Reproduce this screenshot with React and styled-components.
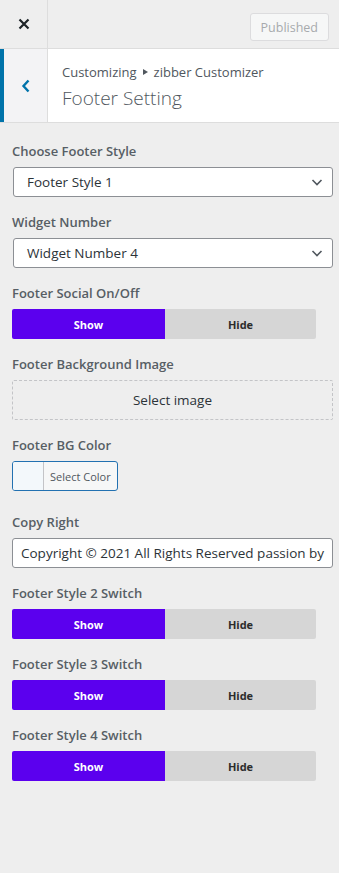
import React from "react";
import styled, { createGlobalStyle } from "styled-components";

const GlobalStyle = createGlobalStyle`
  html, body {
    margin: 0;
    padding: 0;
    background: #eeeeee;
  }
  body {
    font-family: "Open Sans", "Noto Sans", sans-serif;
    color: #50575e;
  }
  * {
    box-sizing: border-box;
  }
`;

const Sidebar = styled.div`
  width: 339px;
  min-height: 873px;
  background: #eeeeee;
`;

const Header = styled.div`
  display: flex;
  height: 49px;
  border-bottom: 1px solid #dddddd;
  background: #eeeeee;
`;

const CloseBox = styled.div`
  width: 48px;
  border-right: 1px solid #dddddd;
  display: flex;
  align-items: center;
  justify-content: center;
`;

const HeaderRight = styled.div`
  flex: 1;
  display: flex;
  align-items: flex-start;
  justify-content: flex-end;
  padding: 13px 10px 0 0;
`;

const PublishedBtn = styled.div`
  height: 28px;
  padding: 0 10px;
  border: 1px solid #dcdcde;
  border-radius: 3px;
  background: #f6f7f7;
  color: #a7aaad;
  font-size: 12.5px;
  display: flex;
  align-items: center;
`;

const SectionHead = styled.div`
  display: flex;
  height: 74px;
  background: #ffffff;
  border-bottom: 1px solid #dddddd;
`;

const BackBtn = styled.div`
  width: 48px;
  background: #f3f3f5;
  border-left: 4px solid #0073aa;
  border-right: 1px solid #dddddd;
  display: flex;
  align-items: center;
  justify-content: center;
`;

const TitleWrap = styled.div`
  padding: 15px 0 0 14px;
`;

const Crumb = styled.div`
  font-size: 13px;
  line-height: 16px;
  color: #50575e;
  display: flex;
  align-items: center;
  gap: 6px;
`;

const Arrow = styled.span`
  width: 0;
  height: 0;
  border-top: 3px solid transparent;
  border-bottom: 3px solid transparent;
  border-left: 5px solid #50575e;
`;

const Title = styled.div`
  font-size: 19px;
  font-weight: 300;
  line-height: 26px;
  margin-top: 5px;
  color: #50575e;
`;

const Body = styled.div`
  padding: 18px 6px 0 12px;
  display: flex;
  flex-direction: column;
`;

const Control = styled.div`
  margin-bottom: ${(p) => (p.extra ? "21px" : "15px")};
`;

const Label = styled.div`
  font-size: 13px;
  font-weight: 600;
  line-height: 20px;
  color: #575e65;
  margin-bottom: 6px;
`;

const SelectBox = styled.div`
  height: 30px;
  margin-left: 1px;
  border: 1px solid #8c8f94;
  border-radius: 3px;
  background: #ffffff;
  display: flex;
  align-items: center;
  justify-content: space-between;
  padding: 0 8px 0 13px;
  font-size: 13.5px;
  color: #2c3338;
`;

const Toggle = styled.div`
  display: flex;
  width: 304px;
  height: 30px;
  border-radius: 2px;
  overflow: hidden;
`;

const ToggleHalf = styled.div`
  flex: ${(p) => (p.active ? "0 0 153px" : "1")};
  display: flex;
  align-items: center;
  justify-content: center;
  font-size: 11px;
  font-weight: 700;
  background: ${(p) => (p.active ? "#5b00ee" : "#d6d6d6")};
  color: ${(p) => (p.active ? "#ffffff" : "#2c2c2c")};
`;

const ImageDrop = styled.div`
  height: 40px;
  border: 1px dashed #c3c4c7;
  border-radius: 2px;
  background: #eeeeee;
  display: flex;
  align-items: center;
  justify-content: center;
  font-size: 13.5px;
  color: #2c3338;
`;

const ColorBtn = styled.div`
  display: flex;
  width: 106px;
  height: 30px;
  border: 1px solid #2271b1;
  border-radius: 3px;
  overflow: hidden;
  background: #f6f7f7;
`;

const Swatch = styled.div`
  width: 31px;
  background: #f3f8fb;
  border-right: 1px solid #c3c4c7;
`;

const ColorText = styled.div`
  padding: 0 6px;
  display: flex;
  align-items: center;
  font-size: 11px;
  color: #50575e;
`;

const TextInput = styled.div`
  height: 30px;
  border: 1px solid #8c8f94;
  border-radius: 3px;
  background: #ffffff;
  display: flex;
  align-items: center;
  padding: 0 8px;
  font-size: 13.5px;
  color: #2c3338;
  white-space: nowrap;
  overflow: hidden;
`;

const Chevron = () => (
  <svg width="14" height="14" viewBox="0 0 14 14">
    <path d="M2.5 5 L7 9.5 L11.5 5" fill="none" stroke="#50575e" strokeWidth="1.6" />
  </svg>
);

const ShowHide = () => (
  <Toggle>
    <ToggleHalf active>Show</ToggleHalf>
    <ToggleHalf>Hide</ToggleHalf>
  </Toggle>
);

export default function App() {
  return (
    <Sidebar>
      <GlobalStyle />
      <Header>
        <CloseBox>
          <svg width="12" height="12" viewBox="0 0 12 12">
            <path d="M1.5 1.5 L10.5 10.5 M10.5 1.5 L1.5 10.5" stroke="#1d2327" strokeWidth="2.2" />
          </svg>
        </CloseBox>
        <HeaderRight>
          <PublishedBtn>Published</PublishedBtn>
        </HeaderRight>
      </Header>
      <SectionHead>
        <BackBtn>
          <svg width="10" height="16" viewBox="0 0 10 16">
            <path d="M7.5 2.5 L2.5 8 L7.5 13.5" fill="none" stroke="#0073aa" strokeWidth="2.4" />
          </svg>
        </BackBtn>
        <TitleWrap>
          <Crumb>
            Customizing <Arrow /> zibber Customizer
          </Crumb>
          <Title>Footer Setting</Title>
        </TitleWrap>
      </SectionHead>
      <Body>
        <Control>
          <Label>Choose Footer Style</Label>
          <SelectBox>
            Footer Style 1 <Chevron />
          </SelectBox>
        </Control>
        <Control>
          <Label>Widget Number</Label>
          <SelectBox>
            Widget Number 4 <Chevron />
          </SelectBox>
        </Control>
        <Control>
          <Label>Footer Social On/Off</Label>
          <ShowHide />
        </Control>
        <Control>
          <Label>Footer Background Image</Label>
          <ImageDrop>Select image</ImageDrop>
        </Control>
        <Control extra>
          <Label>Footer BG Color</Label>
          <ColorBtn>
            <Swatch />
            <ColorText>Select Color</ColorText>
          </ColorBtn>
        </Control>
        <Control>
          <Label>Copy Right</Label>
          <TextInput>Copyright © 2021 All Rights Reserved passion by</TextInput>
        </Control>
        <Control>
          <Label>Footer Style 2 Switch</Label>
          <ShowHide />
        </Control>
        <Control>
          <Label>Footer Style 3 Switch</Label>
          <ShowHide />
        </Control>
        <Control>
          <Label>Footer Style 4 Switch</Label>
          <ShowHide />
        </Control>
      </Body>
    </Sidebar>
  );
}
